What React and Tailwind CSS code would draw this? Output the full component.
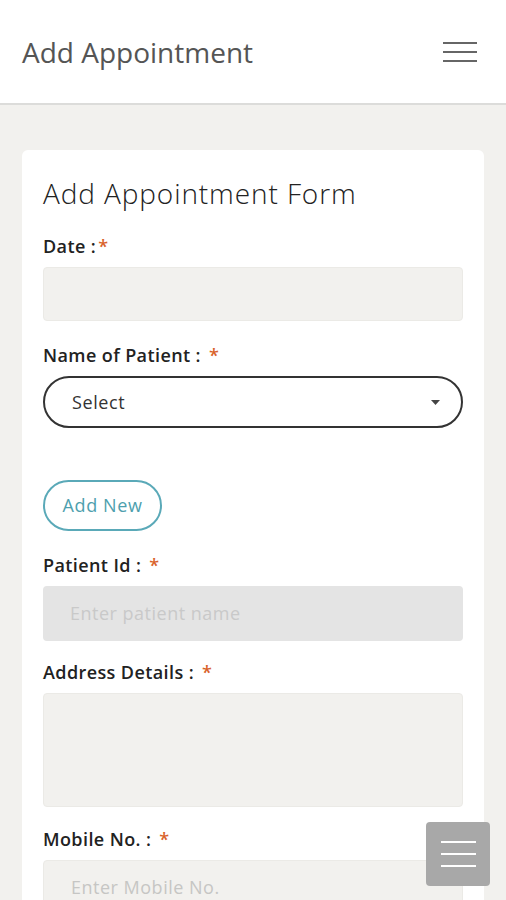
import React from 'react';

function Label({ children, tight }) {
  return (
    <p className="text-[18px] font-semibold text-[#222] leading-none tracking-[0.4px]">
      {children}
      <span className={`text-[#d9622b] ${tight ? 'ml-0.5' : 'ml-2'}`}>*</span>
    </p>
  );
}

export default function App() {
  return (
    <div className="w-full min-h-screen bg-[#f2f1ee] relative" style={{ fontFamily: '"Open Sans", Lato, sans-serif' }}>
      {/* header */}
      <header className="h-[105px] bg-white border-b-2 border-[#dcdcda] flex items-center justify-between pl-[22px] pr-[29px]">
        <h1 className="text-[28px] font-medium text-[#555]">Add Appointment</h1>
        <div className="flex flex-col gap-[7px] w-[34px]">
          <span className="h-[2px] bg-[#666]" />
          <span className="h-[2px] bg-[#666]" />
          <span className="h-[2px] bg-[#666]" />
        </div>
      </header>

      {/* form card */}
      <div className="mx-[22px] mt-[45px] bg-white rounded-[6px] px-[21px] pt-[29px] pb-8">
        <h2 className="text-[28px] font-light text-[#222] leading-none tracking-[0.9px]">Add Appointment Form</h2>

        <div className="mt-[30px]">
          <Label tight>Date :</Label>
          <div className="mt-[12px] h-[54px] bg-[#f2f1ee] border border-[#ebeae6] rounded-[4px]" />
        </div>

        <div className="mt-[25px]">
          <Label>Name of Patient :</Label>
          <div className="mt-[12px] h-[52px] border-2 border-[#333] rounded-full flex items-center justify-between pl-[27px] pr-[21px]">
            <span className="text-[18px] text-[#333] tracking-[0.6px]">Select</span>
            <svg width="9" height="5" viewBox="0 0 9 5"><path d="M0 0h9L4.5 5z" fill="#444" /></svg>
          </div>
        </div>

        <button className="mt-[52px] h-[51px] w-[119px] border-2 border-[#5aa9b8] rounded-full text-[#4e9fae] text-[18px] font-medium tracking-[0.6px]">
          Add New
        </button>

        <div className="mt-[25px]">
          <Label>Patient Id :</Label>
          <div className="mt-[12px] h-[55px] bg-[#e4e4e4] rounded-[4px] flex items-center pl-[27px]">
            <span className="text-[18px] text-[#c9c9c9] tracking-[0.5px]">Enter patient name</span>
          </div>
        </div>

        <div className="mt-[22px]">
          <Label>Address Details :</Label>
          <div className="mt-[12px] h-[114px] bg-[#f2f1ee] border border-[#ebeae6] rounded-[4px]" />
        </div>

        <div className="mt-[23px]">
          <Label>Mobile No. :</Label>
          <div className="mt-[12px] h-[55px] bg-[#f2f1ee] border border-[#ebeae6] rounded-[4px] flex items-center pl-[27px]">
            <span className="text-[18px] text-[#c6c6c4] tracking-[0.5px]">Enter Mobile No.</span>
          </div>
        </div>
      </div>

      {/* floating menu button */}
      <button className="fixed left-[426px] top-[822px] w-[64px] h-[64px] bg-[#a8a8a8] rounded-[4px] flex flex-col items-center justify-center gap-[10px]">
        <span className="w-[35px] h-[2px] bg-white" />
        <span className="w-[35px] h-[2px] bg-white" />
        <span className="w-[35px] h-[2px] bg-white" />
      </button>
    </div>
  );
}
